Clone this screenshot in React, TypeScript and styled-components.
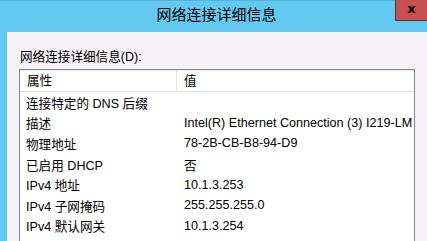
import styled, {createGlobalStyle} from 'styled-components'

const GlobalStyle = createGlobalStyle`
  html, body {
    margin: 0;
    padding: 0;
    background: #62caf0;
  }
  * {
    box-sizing: border-box;
  }
`

const rows: [string, string][] = [
  ['连接特定的 DNS 后缀', ''],
  ['描述', 'Intel(R) Ethernet Connection (3) I219-LM'],
  ['物理地址', '78-2B-CB-B8-94-D9'],
  ['已启用 DHCP', '否'],
  ['IPv4 地址', '10.1.3.253'],
  ['IPv4 子网掩码', '255.255.255.0'],
  ['IPv4 默认网关', '10.1.3.254'],
]

const App = () => {
  return (
    <>
      <GlobalStyle />
      <Window>
        <TitleBar>
          <span />
          <Title>网络连接详细信息</Title>
          <CloseButton>x</CloseButton>
        </TitleBar>
        <Body>
          <Label>网络连接详细信息(D):</Label>
          <ListBox>
            <HeaderRow>
              <HeaderCell $first>属性</HeaderCell>
              <HeaderCell>值</HeaderCell>
            </HeaderRow>
            {rows.map(([name, value]) => (
              <Row key={name}>
                <Cell $first>{name}</Cell>
                <Cell>{value}</Cell>
              </Row>
            ))}
          </ListBox>
        </Body>
      </Window>
    </>
  )
}

export default App

const uiFont = `"Liberation Sans", "Noto Sans CJK SC", sans-serif`

const Window = styled.div`
  width: 427px;
  height: 241px;
  overflow: hidden;
  background: #62caf0;
  display: flex;
  flex-direction: column;
  font-family: ${uiFont};
  font-size: 12.6px;
  color: #000;
`

const TitleBar = styled.div`
  height: 32px;
  flex-shrink: 0;
  display: grid;
  grid-template-columns: 1fr auto 1fr;
  align-items: start;
  border-top: 1px solid #55b4d8;
`

const Title = styled.div`
  font-size: 15px;
  line-height: 28px;
  padding-left: 6px;
`

const CloseButton = styled.div`
  justify-self: end;
  width: 32px;
  height: 21px;
  margin-top: -1px;
  background: #c75050;
  border-left: 1px solid #5e3434;
  border-bottom: 1px solid #5e3434;
  display: flex;
  align-items: center;
  justify-content: center;
  font-family: "DejaVu Sans", sans-serif;
  font-weight: bold;
  font-size: 13px;
  line-height: 1;
  padding-bottom: 3px;
`

const Body = styled.div`
  flex: 1;
  margin-left: 7px;
  background: #f5f1f5;
  padding: 17px 12px 0 12px;
  display: flex;
  flex-direction: column;
`

const Label = styled.div`
  line-height: 16px;
  padding-left: 1px;
`

const ListBox = styled.div`
  margin-top: 4px;
  flex: 1;
  min-height: 0;
  background: #fff;
  border: 1px solid #828790;
  border-bottom: none;
  overflow: hidden;
`

const HeaderRow = styled.div`
  display: flex;
  height: 22px;
  border-top: 1px solid #eaeaea;
  border-bottom: 1px solid #e5e5e5;
`

const HeaderCell = styled.div<{$first?: boolean}>`
  width: ${(p) => (p.$first ? '157px' : 'auto')};
  flex: ${(p) => (p.$first ? '0 0 auto' : '1')};
  padding-left: 7px;
  line-height: 20px;
  border-right: ${(p) => (p.$first ? '1px solid #e5e5e5' : 'none')};
`

const Row = styled.div`
  display: flex;
  height: 20.6px;
  align-items: center;
`

const Cell = styled.div<{$first?: boolean}>`
  width: ${(p) => (p.$first ? '157px' : 'auto')};
  flex: ${(p) => (p.$first ? '0 0 auto' : '1')};
  padding-left: ${(p) => (p.$first ? '6px' : '7px')};
  white-space: nowrap;
  overflow: hidden;
`
